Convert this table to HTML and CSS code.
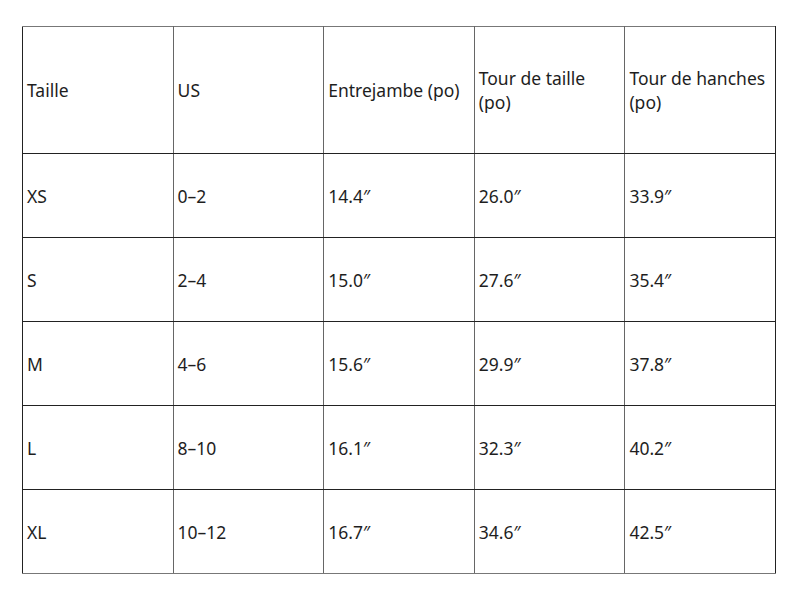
FILE: index.html
```html
<!DOCTYPE html>
<html lang="fr">
<head>
<meta charset="utf-8">
<link rel="stylesheet" href="styles.css">
</head>
<body>
<table class="sizes">
  <thead>
    <tr class="head">
      <th>Taille</th><th>US</th><th>Entrejambe (po)</th><th>Tour de taille (po)</th><th>Tour de hanches (po)</th>
    </tr>
  </thead>
  <tbody>
    <tr><td>XS</td><td>0–2</td><td>14.4″</td><td>26.0″</td><td>33.9″</td></tr>
    <tr><td>S</td><td>2–4</td><td>15.0″</td><td>27.6″</td><td>35.4″</td></tr>
    <tr><td>M</td><td>4–6</td><td>15.6″</td><td>29.9″</td><td>37.8″</td></tr>
    <tr><td>L</td><td>8–10</td><td>16.1″</td><td>32.3″</td><td>40.2″</td></tr>
    <tr><td>XL</td><td>10–12</td><td>16.7″</td><td>34.6″</td><td>42.5″</td></tr>
  </tbody>
</table>
</body>
</html>
```
FILE: styles.css
```css
html, body {
  margin: 0;
  background: #fff;
}
body {
  padding: 26px 0 0 22px;
  font-family: "Noto Sans", "Open Sans", sans-serif;
  font-size: 17.5px;
  color: #1e1e1e;
}
.sizes {
  border-collapse: collapse;
  table-layout: fixed;
  width: 754px;
}
.sizes th,
.sizes td {
  padding: 0 5px 0 4px;
  text-align: left;
  font-weight: normal;
  vertical-align: middle;
  line-height: 24px;
  border-top: 1px solid #222;
  border-bottom: 1px solid #222;
  border-left: 1px solid #666;
  border-right: 1px solid #666;
}
.sizes th:first-child,
.sizes td:first-child {
  border-left-color: #222;
}
.sizes th:last-child,
.sizes td:last-child {
  border-right-color: #222;
}
.sizes thead th {
  border-top-color: #777;
}
.sizes tbody tr:last-child td {
  border-bottom-color: #777;
}
.head {
  height: 127px;
}
.sizes tbody tr {
  height: 84px;
}
```
